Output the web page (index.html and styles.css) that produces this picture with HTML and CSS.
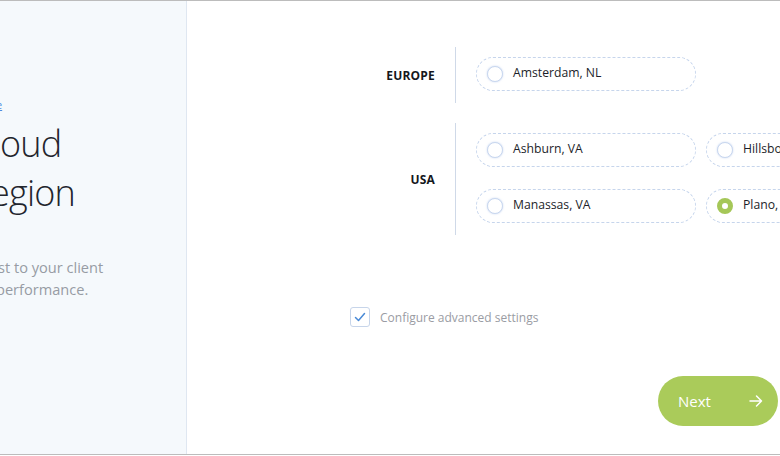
FILE: index.html
```html
<!DOCTYPE html>
<html lang="en">
<head>
<meta charset="utf-8">
<title>Select cloud region</title>
<link rel="stylesheet" href="styles.css">
</head>
<body>
<div class="frame">
  <aside class="side">
    <a class="back" href="#">e</a>
    <h1 class="title"><span class="t1">oud</span><span class="t2">egion</span></h1>
    <p class="lead"><span class="p1">st to your client</span><span class="p2">performance.</span></p>
  </aside>
  <main class="main">
    <div class="regions">
      <div class="group">
        <div class="label">EUROPE</div>
        <div class="options">
          <label class="pill"><span class="radio"></span><span class="city">Amsterdam, NL</span></label>
        </div>
      </div>
      <div class="group">
        <div class="label">USA</div>
        <div class="options">
          <label class="pill"><span class="radio"></span><span class="city">Ashburn, VA</span></label>
          <label class="pill"><span class="radio"></span><span class="city">Hillsboro, OR</span></label>
          <label class="pill"><span class="radio"></span><span class="city">Manassas, VA</span></label>
          <label class="pill"><span class="radio on"></span><span class="city">Plano, TX</span></label>
        </div>
      </div>
    </div>
    <label class="check">
      <span class="box"><svg width="14" height="14" viewBox="0 0 14 14"><path d="M2.5 7.5 L5.5 10.5 L11.5 3.5" fill="none" stroke="#4a8ad6" stroke-width="1.5" stroke-linecap="round" stroke-linejoin="round"/></svg></span>
      <span class="check-text">Configure advanced settings</span>
    </label>
    <div class="actions">
      <button class="next" type="button"><span>Next</span><svg width="16" height="16" viewBox="0 0 16 16"><path d="M2 8 H13.5 M8.5 3 L13.5 8 L8.5 13" fill="none" stroke="#ffffff" stroke-width="1.5" stroke-linecap="round" stroke-linejoin="round"/></svg></button>
    </div>
  </main>
</div>
</body>
</html>
```

FILE: styles.css
```css
* { box-sizing: border-box; }
html, body { margin: 0; padding: 0; background: #ffffff; overflow: hidden; }
body { font-family: "Open Sans", "Liberation Sans", sans-serif; color: #1f2330; }

.frame {
  width: 780px;
  height: 455px;
  border-top: 1px solid #bcbcbc;
  border-bottom: 1px solid #bcbcbc;
  display: flex;
  overflow: hidden;
}

.side {
  width: 187px;
  flex: none;
  background: #f5f9fc;
  border-right: 1px solid #dfe7f1;
  overflow: hidden;
  padding-top: 97px;
}
.back {
  display: block;
  font-size: 11px;
  line-height: 14px;
  color: #4d8fe2;
  text-decoration: underline;
  margin-left: -4px;
}
.title {
  margin: 7px 0 0 0;
  font-weight: 300;
  font-size: 36px;
  line-height: 49px;
  letter-spacing: -0.8px;
  color: #22252d;
}
.title span { display: block; white-space: nowrap; }
.t1 { margin-left: 0; }
.t2 { margin-left: -10px; }
.lead {
  margin: 39px 0 0 0;
  font-size: 14.6px;
  line-height: 22px;
  color: #979ca4;
}
.lead span { display: block; white-space: nowrap; }
.p1 { margin-left: -2px; }
.p2 { margin-left: -4px; }

.main {
  flex: 1;
  min-width: 0;
  padding-top: 46px;
  display: flex;
  flex-direction: column;
}
.regions { display: flex; flex-direction: column; gap: 20px; }
.group {
  display: grid;
  grid-template-columns: 268px 1fr;
}
.label {
  align-self: center;
  text-align: right;
  padding-right: 20px;
  font-size: 12px;
  font-weight: 700;
  letter-spacing: 0.2px;
  color: #15171c;
}
.options {
  border-left: 1px solid #cfd9e8;
  padding: 10px 0 12px 20px;
  display: grid;
  grid-template-columns: 220px 220px;
  gap: 22px 10px;
}
.pill {
  height: 34px;
  border: 1px dashed #c6d5ec;
  border-radius: 17px;
  display: flex;
  align-items: center;
  padding-left: 10px;
  white-space: nowrap;
}
.radio {
  width: 16px;
  height: 16px;
  border-radius: 50%;
  border: 1.5px solid #c9d7ef;
  box-shadow: 0 0 2px rgba(160, 185, 230, 0.6);
  background: #fff;
  flex: none;
}
.radio.on {
  border: 5px solid #a5c758;
  box-shadow: none;
}
.city {
  margin-left: 10px;
  font-size: 12.2px;
  color: #1c1e29;
  position: relative;
  top: -2px;
}

.check {
  margin: 72px 0 0 163px;
  display: flex;
  align-items: center;
  gap: 10px;
}
.box {
  width: 20px;
  height: 20px;
  border: 1px solid #c7d5ea;
  border-radius: 3px;
  display: flex;
  align-items: center;
  justify-content: center;
  background: #fff;
}
.check-text {
  font-size: 12px;
  color: #9a9ca3;
}

.actions { margin: 49px 0 0 471px; }
.next {
  width: 120px;
  height: 50px;
  border: none;
  border-radius: 25px;
  background: #aacb5a;
  color: #ffffff;
  font-family: "Open Sans", "Liberation Sans", sans-serif;
  font-size: 15px;
  display: flex;
  align-items: center;
  justify-content: space-between;
  padding: 0 14px 0 20px;
  cursor: pointer;
}
```
